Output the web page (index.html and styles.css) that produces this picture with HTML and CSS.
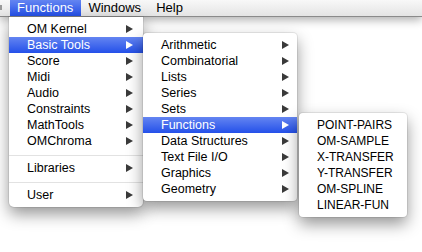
FILE: index.html
```html
<!DOCTYPE html>
<html lang="en">
<head>
    <meta charset="UTF-8">
    <title>Functions menu</title>
    <link rel="stylesheet" href="styles.css">
</head>
<body>

    <div class="menubar">
        <span class="bar-edge"></span>
        <span class="bar-item active">Functions</span>
        <span class="bar-item">Windows</span>
        <span class="bar-item">Help</span>
    </div>

    <!-- first level -->
    <ul class="menu menu-main">
        <li class="sub">OM Kernel</li>
        <li class="sub selected">Basic Tools</li>
        <li class="sub">Score</li>
        <li class="sub">Midi</li>
        <li class="sub">Audio</li>
        <li class="sub">Constraints</li>
        <li class="sub">MathTools</li>
        <li class="sub">OMChroma</li>
        <li class="sep"></li>
        <li class="sub">Libraries</li>
        <li class="sep"></li>
        <li class="sub">User</li>
    </ul>

    <!-- Basic Tools -->
    <ul class="menu menu-tools">
        <li class="sub">Arithmetic</li>
        <li class="sub">Combinatorial</li>
        <li class="sub">Lists</li>
        <li class="sub">Series</li>
        <li class="sub">Sets</li>
        <li class="sub selected">Functions</li>
        <li class="sub">Data Structures</li>
        <li class="sub">Text File I/O</li>
        <li class="sub">Graphics</li>
        <li class="sub">Geometry</li>
    </ul>

    <!-- Functions -->
    <ul class="menu menu-funcs">
        <li>POINT-PAIRS</li>
        <li>OM-SAMPLE</li>
        <li>X-TRANSFER</li>
        <li>Y-TRANSFER</li>
        <li>OM-SPLINE</li>
        <li>LINEAR-FUN</li>
    </ul>

</body>
</html>
```

FILE: styles.css
```css
* {
    box-sizing: border-box;
    margin: 0;
    padding: 0;
}

body {
    position: relative;
    width: 422px;
    height: 252px;
    overflow: hidden;
    background: #fff;
    font-family: "Liberation Sans", Arial, sans-serif;
    color: #000;
}

.menubar {
    display: flex;
    align-items: stretch;
    height: 17px;
    background: linear-gradient(#f8f8f8, #e4e4e4);
    border-bottom: 1px solid #8a8a8a;
    box-shadow: 0 3px 10px rgba(0, 0, 0, 0.32);
    font-size: 13px;
    line-height: 16px;
}

/* tail of the previous menu title */
.bar-edge {
    width: 2px;
    height: 5px;
    margin: 5px 8px 0 0;
    background: #9a9a9a;
}

.bar-item {
    padding: 0 8px 0 7px;
}

.bar-item.active {
    color: #fff;
    background: linear-gradient(#6485f1, #2450e9);
}

.menu {
    position: absolute;
    list-style: none;
    background: #fff;
    font-size: 12.5px;
    line-height: 16px;
    padding: 4px 0;
    box-shadow: 0 7px 16px rgba(0, 0, 0, 0.42), 0 0 0 1px rgba(0, 0, 0, 0.08);
    border-radius: 4px;
}

.menu li {
    position: relative;
    height: 16px;
    padding-left: 18px;
}

.menu li.sub::after {
    content: "";
    position: absolute;
    top: 4px;
    right: 10px;
    border-left: 7px solid #3a3a3a;
    border-top: 4px solid transparent;
    border-bottom: 4px solid transparent;
}

.menu li.selected {
    color: #fff;
    background: linear-gradient(#6485f1, #2450e9);
}

.menu li.selected::after {
    border-left-color: #fff;
}

.menu li.sep {
    height: 11px;
    padding: 0;
}

.menu li.sep::before {
    content: "";
    position: absolute;
    left: 0;
    right: 0;
    top: 6px;
    border-top: 1px solid #e2e2e2;
}

.menu-main {
    left: 9px;
    top: 17px;
    width: 134px;
    border-radius: 0 0 5px 5px;
    z-index: 1;
}

.menu-tools {
    left: 143px;
    top: 33px;
    width: 154px;
    z-index: 2;
}

.menu-tools li.sub::after {
    right: 8px;
}

.menu-funcs {
    left: 299px;
    top: 113px;
    width: 108px;
    font-size: 12px;
    z-index: 3;
}
```
